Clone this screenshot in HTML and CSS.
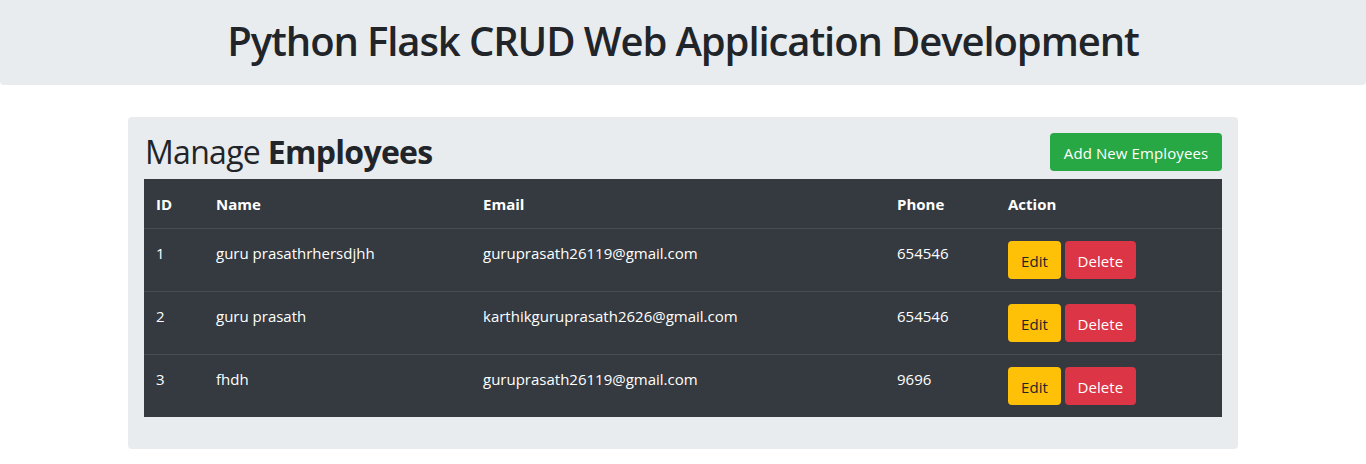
FILE: index.html
```html
<!DOCTYPE html>
<html lang="en">
<head>
<meta charset="utf-8">
<title>Python Flask CRUD</title>
<link rel="stylesheet" href="styles.css">
</head>
<body>
<header class="jumbo">
  <h1 class="title">Python Flask CRUD Web Application Development</h1>
</header>
<main class="container">
  <section class="panel">
    <div class="panel-head">
      <h2 class="heading">Manage <b>Employees</b></h2>
      <button class="btn btn-success">Add New Employees</button>
    </div>
    <table class="table">
      <colgroup>
        <col class="c-id"><col class="c-name"><col class="c-email"><col class="c-phone"><col class="c-action">
      </colgroup>
      <thead>
        <tr><th>ID</th><th>Name</th><th>Email</th><th>Phone</th><th>Action</th></tr>
      </thead>
      <tbody>
        <tr><td>1</td><td>guru prasathrhersdjhh</td><td>guruprasath26119@gmail.com</td><td>654546</td><td><button class="btn btn-warning">Edit</button> <button class="btn btn-danger">Delete</button></td></tr>
        <tr><td>2</td><td>guru prasath</td><td>karthikguruprasath2626@gmail.com</td><td>654546</td><td><button class="btn btn-warning">Edit</button> <button class="btn btn-danger">Delete</button></td></tr>
        <tr><td>3</td><td>fhdh</td><td>guruprasath26119@gmail.com</td><td>9696</td><td><button class="btn btn-warning">Edit</button> <button class="btn btn-danger">Delete</button></td></tr>
      </tbody>
    </table>
  </section>
</main>
</body>
</html>
```
FILE: styles.css
```css
* { box-sizing: border-box; }
html, body { margin: 0; padding: 0; }
body {
  font-family: "Open Sans", "Noto Sans", sans-serif;
  font-size: 16px;
  line-height: 24px;
  color: #212529;
  background: #fff;
}
.jumbo {
  background: #e9ecef;
  border-radius: 0 0 4px 4px;
  padding: 17px 0 20px;
}
.title {
  margin: 0;
  text-align: center;
  font-size: 40px;
  line-height: 48px;
  font-weight: 600;
  letter-spacing: -1.1px;
}
.container {
  width: 1110px;
  margin: 32px auto 0;
}
.panel {
  background: #e9ecef;
  border-radius: 4px;
  padding: 16px 16px 32px;
}
.panel-head {
  display: flex;
  justify-content: space-between;
  align-items: flex-start;
  margin-bottom: 8px;
}
.heading {
  margin: 0;
  font-size: 32px;
  line-height: 38px;
  font-weight: 400;
  letter-spacing: -0.7px;
  padding-left: 1px;
}
.heading b { font-weight: 700; }
.btn {
  font-family: inherit;
  font-size: 15px;
  line-height: 24px;
  padding: 7px 0;
  height: 38px;
  border: 1px solid transparent;
  border-radius: 4px;
  cursor: pointer;
  letter-spacing: 0.1px;
}
.btn-success { background: #28a745; color: #fff; width: 172px; }
.btn-warning { background: #ffc107; color: #212529; width: 53px; }
.btn-danger { background: #dc3545; color: #fff; width: 71px; }
.table {
  width: 1078px;
  border-collapse: collapse;
  background: #343a40;
  color: #fff;
  table-layout: fixed;
}
.c-id { width: 60px; }
.c-name { width: 267px; }
.c-email { width: 414px; }
.c-phone { width: 111px; }
.c-action { width: 226px; }
.table th, .table td {
  padding: 12px;
  text-align: left;
  vertical-align: top;
  font-size: 15px;
  letter-spacing: 0;
}
.table th { font-weight: 700; border-bottom: 1px solid #454d55; padding: 13px 12px 12px; }
.table td { border-top: 1px solid #454d55; }
.table tbody tr:first-child td { border-top: 0; }
```
